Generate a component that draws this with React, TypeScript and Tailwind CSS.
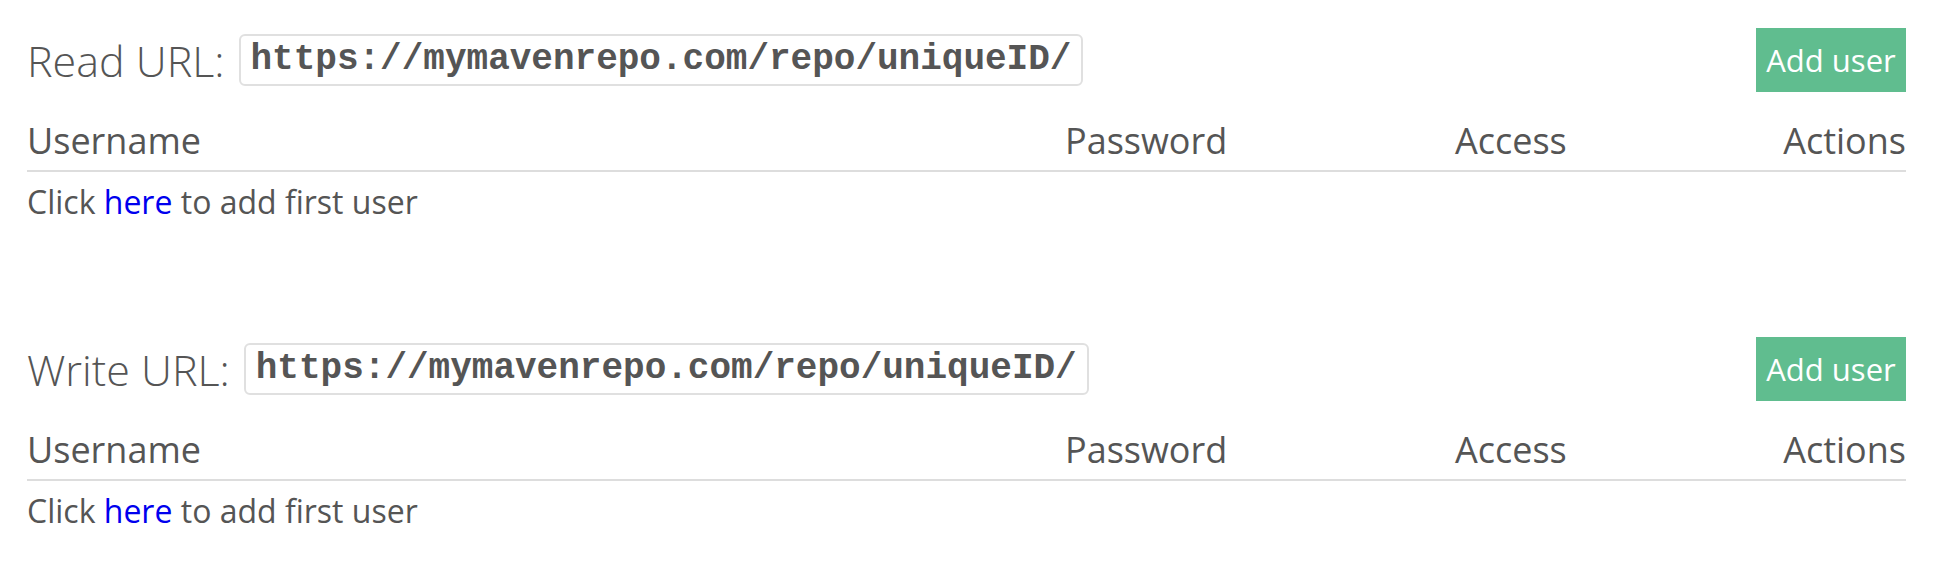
import React from "react";

const sans = "font-['Open_Sans',_'Liberation_Sans',_sans-serif]";

function RepoSection({ label, url }: { label: string; url: string }) {
  return (
    <section className="mb-[113px]">
      <div className="flex h-16 items-center justify-between">
        <div className="flex items-center gap-[14px]">
          <span className="text-[43px] leading-none font-light text-[#555]">{label}</span>
          <div className="flex h-[52px] items-center rounded-md border-2 border-[#e0e0e0] px-[10px] font-['Liberation_Mono',_monospace] text-[36px] font-bold text-[#555]">
            {url}
          </div>
        </div>
        <button className="h-16 w-[150px] bg-[#60bd8f] text-[31px] text-white">Add user</button>
      </div>

      {/* table head */}
      <div className="mt-[27px] grid grid-cols-[1038px_390px_1fr_auto] border-b-2 border-[#dddddd] pb-[7px] text-[36px] leading-[44px] text-[#555]">
        <span>Username</span>
        <span>Password</span>
        <span>Access</span>
        <span className="text-right">Actions</span>
      </div>

      <p className="pt-[8px] text-[32px] leading-[44px] text-[#555]">
        Click{" "}
        <a href="#" className="text-[#0000ee]">
          here
        </a>{" "}
        to add first user
      </p>
    </section>
  );
}

export default function App() {
  return (
    <main className={`min-h-screen bg-white pt-[28px] pl-[27px] pr-[42px] ${sans}`}>
      <RepoSection label="Read URL:" url="https://mymavenrepo.com/repo/uniqueID/" />
      <RepoSection label="Write URL:" url="https://mymavenrepo.com/repo/uniqueID/" />
    </main>
  );
}
